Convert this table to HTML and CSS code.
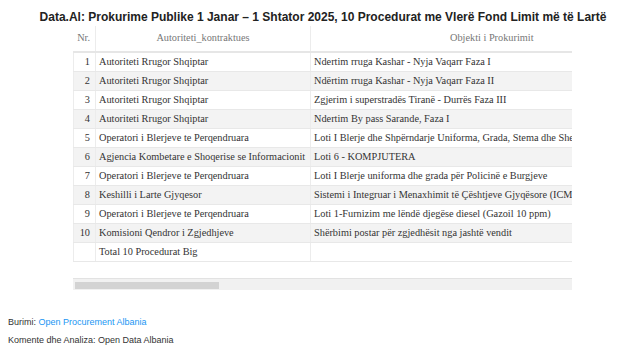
FILE: index.html
```html
<!DOCTYPE html>
<html lang="sq">
<head>
<meta charset="utf-8">
<title>Data.Al: Prokurime Publike</title>
<link rel="stylesheet" href="styles.css">
</head>
<body>
<h1 class="title">Data.Al: Prokurime Publike 1 Janar – 1 Shtator 2025, 10 Procedurat me Vlerë Fond Limit më të Lartë</h1>
<div class="figure">
  <div class="scroller">
    <table class="data">
      <colgroup>
        <col class="c-nr"><col class="c-aut"><col class="c-obj">
      </colgroup>
      <thead>
        <tr><th>Nr.</th><th>Autoriteti_kontraktues</th><th>Objekti i Prokurimit</th></tr>
      </thead>
      <tbody>
        <tr><td class="nr">1</td><td>Autoriteti Rrugor Shqiptar</td><td>Ndertim rruga Kashar - Nyja Vaqarr Faza I</td></tr>
        <tr><td class="nr">2</td><td>Autoriteti Rrugor Shqiptar</td><td>Ndërtim rruga Kashar - Nyja Vaqarr Faza II</td></tr>
        <tr><td class="nr">3</td><td>Autoriteti Rrugor Shqiptar</td><td>Zgjerim i superstradës Tiranë - Durrës Faza III</td></tr>
        <tr><td class="nr">4</td><td>Autoriteti Rrugor Shqiptar</td><td>Ndertim By pass Sarande, Faza I</td></tr>
        <tr><td class="nr">5</td><td>Operatori i Blerjeve te Perqendruara</td><td>Loti I Blerje dhe Shpërndarje Uniforma, Grada, Stema dhe Shenja</td></tr>
        <tr><td class="nr">6</td><td>Agjencia Kombetare e Shoqerise se Informacionit</td><td>Loti 6 - KOMPJUTERA</td></tr>
        <tr><td class="nr">7</td><td>Operatori i Blerjeve te Perqendruara</td><td>Loti I Blerje uniforma dhe grada për Policinë e Burgjeve</td></tr>
        <tr><td class="nr">8</td><td>Keshilli i Larte Gjyqesor</td><td>Sistemi i Integruar i Menaxhimit të Çështjeve Gjyqësore (ICMIS)</td></tr>
        <tr><td class="nr">9</td><td>Operatori i Blerjeve te Perqendruara</td><td>Loti 1-Furnizim me lëndë djegëse diesel (Gazoil 10 ppm)</td></tr>
        <tr><td class="nr">10</td><td>Komisioni Qendror i Zgjedhjeve</td><td>Shërbimi postar për zgjedhësit nga jashtë vendit</td></tr>
        <tr class="total"><td class="nr"></td><td>Total 10 Procedurat Big</td><td></td></tr>
      </tbody>
    </table>
  </div>
  <div class="scrollbar"><div class="thumb"></div></div>
</div>
<div class="notes">
  <p class="note">Burimi: <a href="#" class="link">Open Procurement Albania</a></p>
  <p class="note">Komente dhe Analiza: Open Data Albania</p>
</div>
</body>
</html>
```
FILE: styles.css
```css
html, body {
  margin: 0;
  padding: 0;
  background: #fff;
}
body {
  font-family: "Liberation Sans", Arial, sans-serif;
  color: #333;
}
.title {
  margin: 0;
  padding: 10px 0 0 6px;
  height: 16px;
  font-size: 12px;
  line-height: 14px;
  font-weight: bold;
  color: #222;
  text-align: center;
  white-space: nowrap;
}
.figure {
  padding: 0 68px 0 73px;
}
.scroller {
  width: 499px;
  overflow: hidden;
}
.data {
  table-layout: fixed;
  width: 599px;
  border-collapse: collapse;
  border-spacing: 0;
  font-family: "Liberation Serif", "Times New Roman", serif;
  font-size: 10.3px;
  line-height: 12px;
  color: #333;
}
.c-nr { width: 22px; }
.c-aut { width: 215px; }
.c-obj { width: 362px; }
.data th,
.data td {
  white-space: nowrap;
  overflow: hidden;
  text-align: left;
}
.data th {
  padding: 6px 3px 7px;
  font-weight: normal;
  color: #777;
  text-align: center;
  border-bottom: 2px solid #e6e6e6;
  border-left: 1px solid #ececec;
}
.data th:first-child {
  border-left: none;
  text-align: right;
  padding-right: 5px;
}
.data td {
  padding: 3px 2px 3px 3px;
  border-bottom: 1px solid #e8e8e8;
  border-left: 1px solid #ececec;
}
.data td.nr {
  text-align: right;
  padding-right: 5px;
}
.data tbody tr:nth-child(even) td {
  background: #f3f3f3;
}
.data tbody tr.total td {
  background: #fff;
}
.scrollbar {
  width: 499px;
  height: 11px;
  margin-top: 16px;
  background: #f1f1f1;
  border-top: 1px solid #e2e2e2;
}
.thumb {
  width: 144px;
  height: 7px;
  margin: 3px 0 0 2px;
  background: #d3d3d3;
}
.notes {
  padding: 26px 8px 0;
}
.note {
  margin: 0 0 6px;
  font-size: 9px;
  line-height: 12px;
  color: #333;
}
.link {
  color: #2196f3;
  text-decoration: none;
}
```
